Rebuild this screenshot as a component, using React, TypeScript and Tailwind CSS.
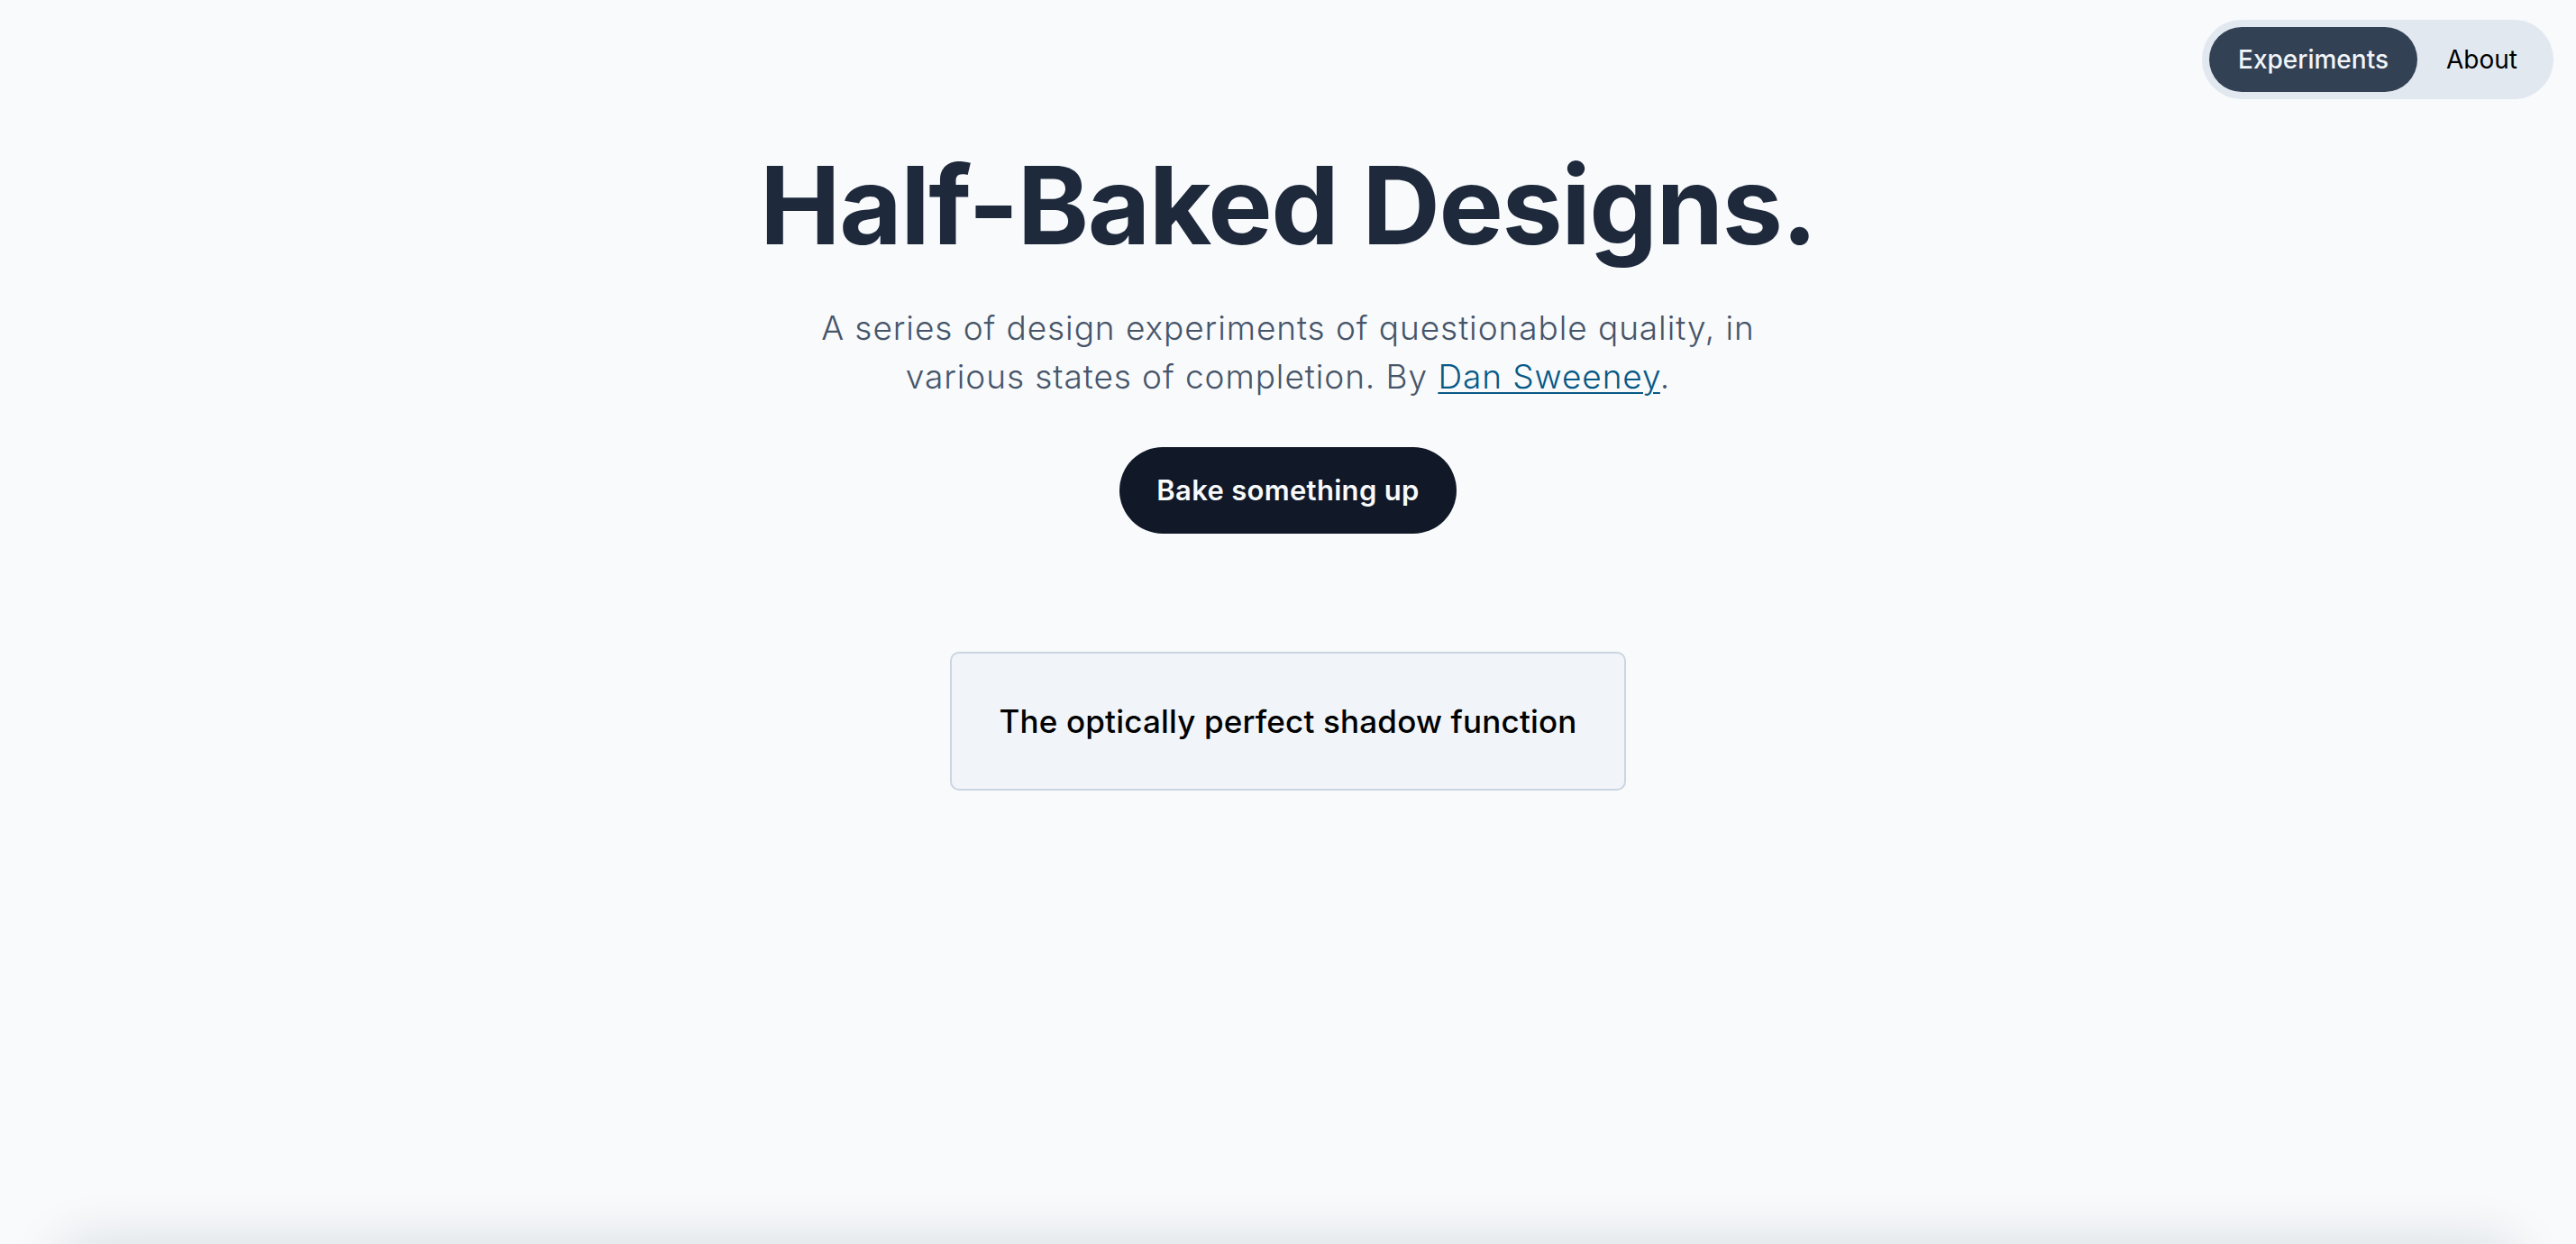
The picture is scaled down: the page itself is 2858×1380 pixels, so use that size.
import React from 'react';

const Nav = () => {
  return (
    <header className="flex justify-end pt-[22px] pr-[25px]">
      <nav className="flex items-center rounded-full bg-[#e2e8f0] p-2">
        <a href="#experiments" className="flex h-[72px] items-center rounded-full bg-[#334155] px-8 text-[28px] font-medium text-[#f1f5f9]">
          Experiments
        </a>
        <a href="#about" className="flex h-[72px] items-center rounded-full px-8 text-[28px] font-normal text-black">
          About
        </a>
      </nav>
    </header>
  );
};

const App = () => {
  return (
    <div className="flex h-screen flex-col overflow-hidden bg-[#f8fafc] font-['Inter',sans-serif]">
      <Nav />

      <main className="flex flex-col items-center text-center">
        <h1 className="mt-[58px] text-[120px] font-bold leading-none tracking-[-0.0125em] text-[#1e293b]">
          Half-Baked Designs.
        </h1>

        <p className="mt-[49px] text-[37px] font-light leading-[54px] tracking-[0.025em] text-[#475569]">
          A series of design experiments of questionable quality, in
          <br />
          various states of completion. By{' '}
          <a href="#dan" className="text-[#075985] underline decoration-2 underline-offset-4">
            Dan Sweeney
          </a>
          .
        </p>

        <button className="mt-[51px] flex h-[96px] items-center rounded-full bg-[#111827] px-[41px] text-[31px] font-semibold tracking-[0.01em] text-[#f8fafc]">
          Bake something up
        </button>

        <a
          href="#shadow"
          className="mt-[131px] block w-[750px] whitespace-nowrap rounded-[10px] border-2 border-[#cbd5e1] bg-[#f1f5f9] py-[48px] text-[35px] font-medium leading-[54px] tracking-[0.005em] text-black"
        >
          The optically perfect shadow function
        </a>
      </main>

      <div className="mt-auto mb-[-40px] mx-[60px] h-[40px] shrink-0 rounded-t-[40px] bg-[#f8fafc] shadow-[0_0_60px_rgba(15,23,42,0.16)]" />
    </div>
  );
};

export default App;
